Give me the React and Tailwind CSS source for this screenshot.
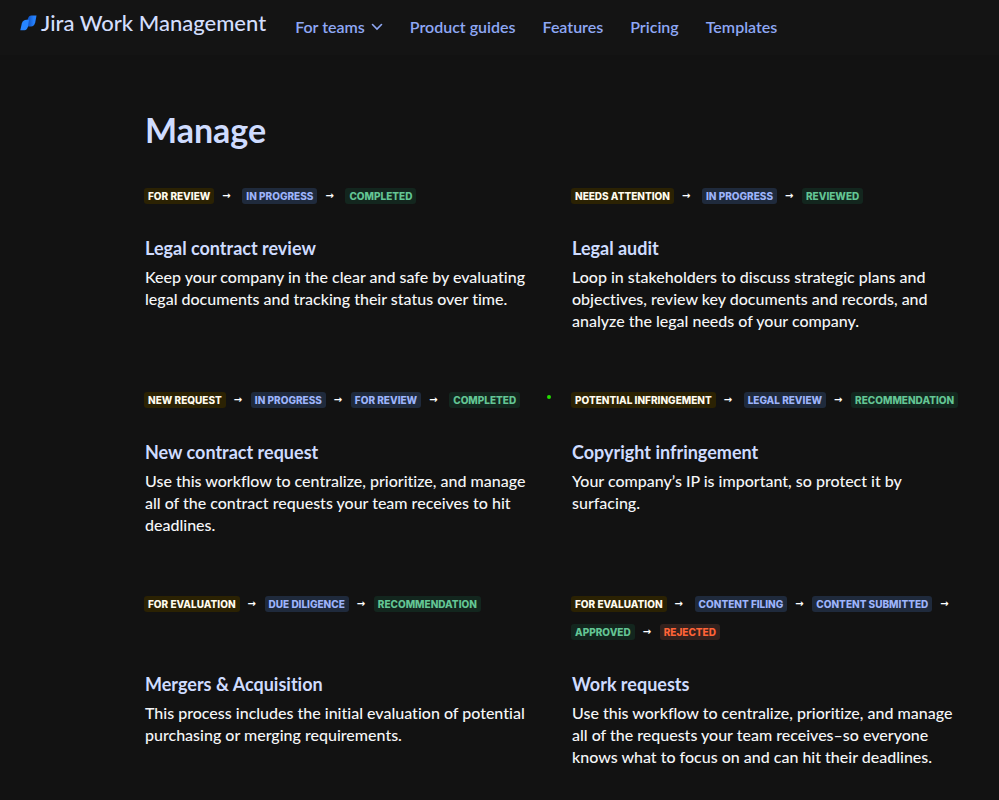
import React from "react";

const navLinks = ["Product guides", "Features", "Pricing", "Templates"];

const badgeColors = {
  todo: "bg-[#2b2203] text-[#fffbee]",
  active: "bg-[#1f2a3c] text-[#9db4fb]",
  done: "bg-[#13261e] text-[#63c594]",
  rejected: "bg-[#33211d] text-[#ff6337]",
};

// [label, kind, wide gap after the arrow]
const workflows = [
  {
    title: "Legal contract review",
    text: "Keep your company in the clear and safe by evaluating legal documents and tracking their status over time.",
    steps: [
      ["For review", "todo", true],
      ["In progress", "active", true],
      ["Completed", "done"],
    ],
  },
  {
    title: "Legal audit",
    text: "Loop in stakeholders to discuss strategic plans and objectives, review key documents and records, and analyze the legal needs of your company.",
    steps: [
      ["Needs attention", "todo", true],
      ["In progress", "active"],
      ["Reviewed", "done"],
    ],
  },
  {
    title: "New contract request",
    text: "Use this workflow to centralize, prioritize, and manage all of the contract requests your team receives to hit deadlines.",
    steps: [
      ["New request", "todo"],
      ["In progress", "active"],
      ["For review", "active", true],
      ["Completed", "done"],
    ],
    marker: true,
  },
  {
    title: "Copyright infringement",
    text: "Your company’s IP is important, so protect it by surfacing.",
    steps: [
      ["Potential infringement", "todo", true],
      ["Legal review", "active"],
      ["Recommendation", "done"],
    ],
  },
  {
    title: "Mergers & Acquisition",
    text: "This process includes the initial evaluation of potential purchasing or merging requirements.",
    steps: [
      ["For evaluation", "todo"],
      ["Due diligence", "active"],
      ["Recommendation", "done"],
    ],
  },
  {
    title: "Work requests",
    text: "Use this workflow to centralize, prioritize, and manage all of the requests your team receives–so everyone knows what to focus on and can hit their deadlines.",
    steps: [
      ["For evaluation", "todo", true],
      ["Content filing", "active"],
      ["Content submitted", "active"],
      ["Approved", "done"],
      ["Rejected", "rejected"],
    ],
  },
];

const Logo = () => (
  <svg width="17" height="16" viewBox="0 0 17 16" aria-hidden="true">
    <defs>
      <linearGradient id="fold" x1="0" y1="0" x2="1" y2="0">
        <stop offset="0" stopColor="#0d4fc0" />
        <stop offset="0.7" stopColor="#2580fb" />
      </linearGradient>
    </defs>
    <path d="M7.5 11.5V4.8Q8.5 0.5 11.5 0.5H16.5L15.2 7.5Q14.2 11.5 11 11.5Z" fill="url(#fold)" />
    <path d="M0.3 15.2L1.8 8.5Q3 4.8 6.6 4.8H9L8 11.5Q7 15.2 4.6 15.2Z" fill="#2684ff" />
  </svg>
);

const Chevron = () => (
  <svg width="12" height="8" viewBox="0 0 12 8" fill="none" stroke="currentColor" strokeWidth="1.6" strokeLinecap="round" aria-hidden="true">
    <path d="M1.5 1.5L6 6L10.5 1.5" />
  </svg>
);

const Workflow = ({ title, text, steps, marker }) => (
  <article className="row-span-3 grid grid-rows-subgrid">
    <ul className="relative -ml-px flex flex-wrap content-start font-['Inter']">
      {steps.map(([label, kind, wide], i) => (
        <li key={label} className="flex h-7 items-center">
          <span className={`${badgeColors[kind]} rounded-[3px] px-1 text-[10px] leading-4 font-extrabold uppercase`}>
            {label}
          </span>
          {i < steps.length - 1 && (
            <span className={`${wide ? "w-7" : "w-[25px]"} pl-2 font-['DejaVu_Sans'] text-[10px] leading-4 font-bold text-white`}>
              →
            </span>
          )}
        </li>
      ))}
      {marker && <li className="absolute top-[9px] -right-[15px] size-1 rounded-full bg-[#22dd00]" aria-hidden="true" />}
    </ul>
    <h2 className="mt-6 text-lg leading-7 font-bold text-[#cfdcff]">{title}</h2>
    <p className="mt-1 mb-[54px] pr-2 text-base leading-[22px] font-medium text-[#f5f6f8]">{text}</p>
  </article>
);

const App = () => {
  return (
    <div className="min-h-screen bg-[#121212] font-['Lato',sans-serif] [font-variant-ligatures:none]">
      {/* Header */}
      <header className="flex h-[55px] items-center bg-[#141414] pl-5">
        <a href="#" className="mb-2.5 flex items-center gap-1 text-[22px] leading-7 font-medium whitespace-nowrap text-[#d3defd]">
          <Logo />
          Jira Work Management
        </a>
        <nav className="mb-px ml-[29px] flex items-center gap-[27px] text-base font-semibold whitespace-nowrap text-[#8fa8f5]">
          <button type="button" className="flex items-center gap-1.5">
            For teams
            <Chevron />
          </button>
          {navLinks.map((link) => (
            <a key={link} href="#">
              {link}
            </a>
          ))}
        </nav>
      </header>

      {/* Workflows */}
      <main className="pt-[55px] pr-9 pl-[145px]">
        <h1 className="text-[34px] leading-10 font-bold text-[#cfdcff]">Manage</h1>
        <div className="mt-8 grid grid-cols-2 gap-x-9">
          {workflows.map((workflow) => (
            <Workflow key={workflow.title} {...workflow} />
          ))}
        </div>
      </main>
    </div>
  );
};

export default App;
